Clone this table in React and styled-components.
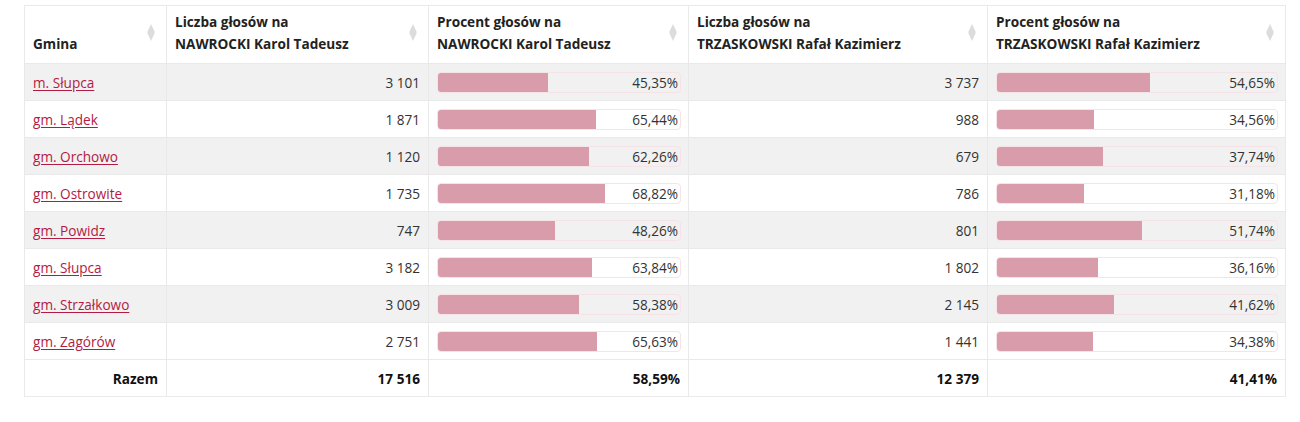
import React from 'react';
import styled, { createGlobalStyle } from 'styled-components';

const GlobalStyle = createGlobalStyle`
  body {
    margin: 0;
    background: #fff;
    font-family: 'Open Sans', 'Noto Sans', sans-serif;
    color: #333;
  }
`;

const rows = [
  { name: 'm. Słupca', a: '3 101', ap: 45.35, b: '3 737', bp: 54.65 },
  { name: 'gm. Lądek', a: '1 871', ap: 65.44, b: '988', bp: 34.56 },
  { name: 'gm. Orchowo', a: '1 120', ap: 62.26, b: '679', bp: 37.74 },
  { name: 'gm. Ostrowite', a: '1 735', ap: 68.82, b: '786', bp: 31.18 },
  { name: 'gm. Powidz', a: '747', ap: 48.26, b: '801', bp: 51.74 },
  { name: 'gm. Słupca', a: '3 182', ap: 63.84, b: '1 802', bp: 36.16 },
  { name: 'gm. Strzałkowo', a: '3 009', ap: 58.38, b: '2 145', bp: 41.62 },
  { name: 'gm. Zagórów', a: '2 751', ap: 65.63, b: '1 441', bp: 34.38 },
];

const fmt = (v) => v.toFixed(2).replace('.', ',') + '%';

// sort marker, a pale diamond
const SortIcon = () => (
  <SortSvg width="8" height="17" viewBox="0 0 8 17">
    <path d="M4 0 L7.5 7.5 L7.5 9.5 L4 17 L0.5 9.5 L0.5 7.5 Z" fill="#dcdcdc" />
  </SortSvg>
);

const Bar = ({ value }) => (
  <Track>
    <Fill style={{ width: `${value}%` }} />
    <BarLabel>{fmt(value)}</BarLabel>
  </Track>
);

const App = () => {
  const headers = [
    ['Gmina'],
    ['Liczba głosów na', 'NAWROCKI Karol Tadeusz'],
    ['Procent głosów na', 'NAWROCKI Karol Tadeusz'],
    ['Liczba głosów na', 'TRZASKOWSKI Rafał Kazimierz'],
    ['Procent głosów na', 'TRZASKOWSKI Rafał Kazimierz'],
  ];
  return (
    <>
      <GlobalStyle />
      <Page>
        <Table>
          <colgroup>
            <col style={{ width: 142 }} />
            <col style={{ width: 262 }} />
            <col style={{ width: 260 }} />
            <col style={{ width: 299 }} />
            <col style={{ width: 298 }} />
          </colgroup>
          <thead>
            <tr>
              {headers.map((h, i) => (
                <Th key={i}>
                  <HeadInner>
                    <span>
                      {h.map((l, j) => (
                        <React.Fragment key={j}>
                          {j > 0 && <br />}
                          {l}
                        </React.Fragment>
                      ))}
                    </span>
                    <SortIcon />
                  </HeadInner>
                </Th>
              ))}
            </tr>
          </thead>
          <tbody>
            {rows.map((r, i) => (
              <Row key={r.name} $striped={i % 2 === 0}>
                <Td>
                  <Link href="#">{r.name}</Link>
                </Td>
                <Td $right>{r.a}</Td>
                <BarCell>
                  <Bar value={r.ap} />
                </BarCell>
                <Td $right>{r.b}</Td>
                <BarCell>
                  <Bar value={r.bp} />
                </BarCell>
              </Row>
            ))}
            <Row>
              <Td $right $bold>Razem</Td>
              <Td $right $bold>17 516</Td>
              <Td $right $bold>58,59%</Td>
              <Td $right $bold>12 379</Td>
              <Td $right $bold>41,41%</Td>
            </Row>
          </tbody>
        </Table>
      </Page>
    </>
  );
};

export default App;

const Page = styled.div`
  padding: 5px 15px 0 24px;
`;

const Table = styled.table`
  width: 1261px;
  table-layout: fixed;
  border-collapse: collapse;
  font-size: 13.6px;
  border: 1px solid #e9e9e9;
`;

const Th = styled.th`
  height: 58px;
  padding: 0 8px 8px 8px;
  vertical-align: bottom;
  text-align: left;
  font-weight: 700;
  line-height: 22px;
  color: #222;
  border-left: 1px solid #e9e9e9;
  border-bottom: 1px solid #e9e9e9;
  box-sizing: border-box;
`;

const HeadInner = styled.div`
  display: flex;
  align-items: flex-end;
  justify-content: space-between;
  min-height: 44px;
`;

const SortSvg = styled.svg`
  flex-shrink: 0;
  align-self: center;
  margin-top: -2px;
  margin-right: 3px;
`;

const Row = styled.tr`
  height: 37px;
  background: ${({ $striped }) => ($striped ? '#f1f1f1' : '#fff')};
`;

const Td = styled.td`
  padding: 0 8px;
  text-align: ${({ $right }) => ($right ? 'right' : 'left')};
  font-weight: ${({ $bold }) => ($bold ? 700 : 400)};
  color: ${({ $bold }) => ($bold ? '#111' : '#333')};
  border-left: 1px solid #e9e9e9;
  border-bottom: 1px solid #e9e9e9;
  white-space: nowrap;
`;

const BarCell = styled(Td)`
  padding: 0 7px 0 8px;
`;

const Link = styled.a`
  color: #b31b43;
  text-decoration: underline;
  text-underline-offset: 2px;
`;

const Track = styled.div`
  position: relative;
  height: 21px;
  border: 1px solid #f6e3e7;
  border-radius: 4px;
  overflow: hidden;
  box-sizing: border-box;
  display: flex;
  align-items: center;
  justify-content: flex-end;
`;

const Fill = styled.div`
  position: absolute;
  left: 0;
  top: 0;
  bottom: 0;
  background: #d99caa;
`;

const BarLabel = styled.span`
  position: relative;
  padding-right: 2px;
  color: #333;
`;
